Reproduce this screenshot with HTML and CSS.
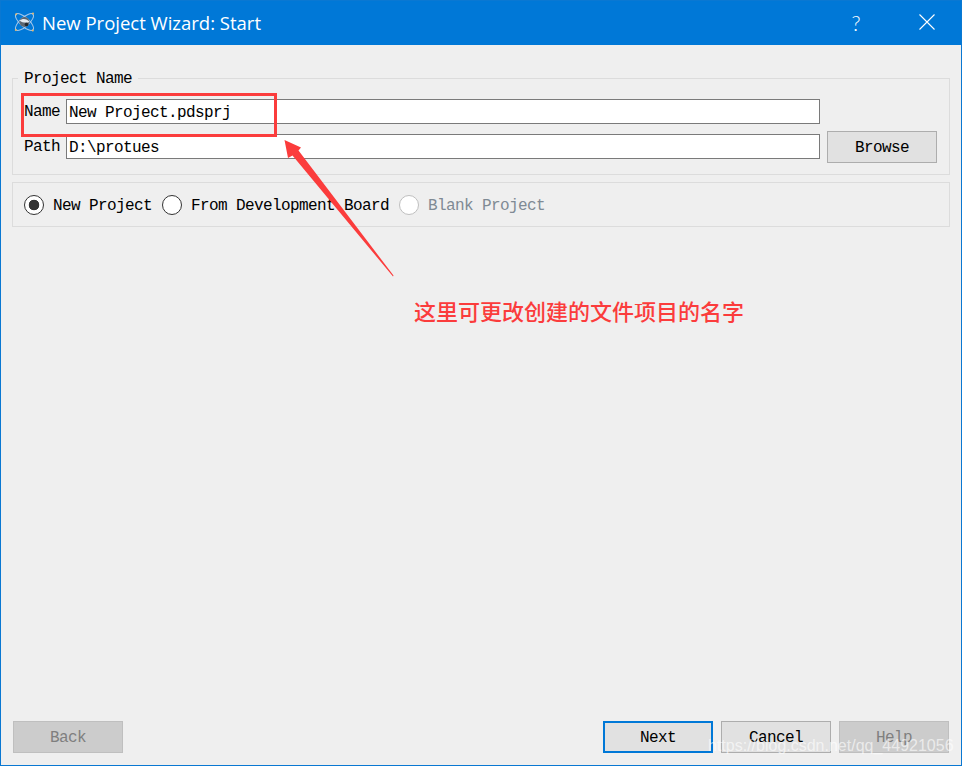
FILE: index.html
```html
<!DOCTYPE html>
<html lang="en">
<head>
<meta charset="utf-8">
<title>New Project Wizard: Start</title>
<link rel="stylesheet" href="styles.css">
</head>
<body>
<div class="window">
  <header class="titlebar">
    <svg class="app-icon" width="24" height="24" viewBox="0 0 24 24">
      <g fill="none" stroke="#a6c8ea" stroke-width="1">
        <ellipse cx="11.5" cy="12" rx="11.5" ry="4.4" transform="rotate(42 11.5 12)"/>
        <ellipse cx="11.5" cy="12" rx="11.5" ry="4.4" transform="rotate(-42 11.5 12)"/>
      </g>
      <circle cx="11.5" cy="12" r="5" fill="#5c6772"/>
      <path d="M6.5 10.5 C9.5 8 14 8.5 16.6 12 C13.5 13 9.5 13 6.5 10.5Z" fill="#e3eaf0"/>
      <circle cx="13.5" cy="14.6" r="1.8" fill="#22282e"/>
      <g fill="#e8b96a">
        <circle cx="3.2" cy="4.2" r="1"/>
        <circle cx="20" cy="3.4" r="1"/>
        <circle cx="2.8" cy="20" r="1"/>
        <circle cx="19.8" cy="20.4" r="1"/>
      </g>
    </svg>
    <span class="title-text">New Project Wizard: Start</span>
    <span class="help-glyph">?</span>
    <svg class="close-glyph" width="16" height="16" viewBox="0 0 16 16">
      <path d="M0.5 0.5 L15.5 15.5 M15.5 0.5 L0.5 15.5" stroke="#fff" stroke-width="1.1" fill="none"/>
    </svg>
  </header>

  <main class="content">
    <section class="group group-name">
      <span class="legend">Project Name</span>
      <div class="form-row row-name">
        <label class="field-label">Name</label>
        <div class="input">New Project.pdsprj</div>
      </div>
      <div class="form-row row-path">
        <label class="field-label">Path</label>
        <div class="input">D:\protues</div>
        <button class="btn browse">Browse</button>
      </div>
    </section>

    <section class="group group-type">
      <div class="radio-item">
        <span class="radio checked"></span><span>New Project</span>
      </div>
      <div class="radio-item">
        <span class="radio"></span><span>From Development Board</span>
      </div>
      <div class="radio-item disabled">
        <span class="radio"></span><span>Blank Project</span>
      </div>
    </section>

    <footer class="buttons">
      <button class="btn off">Back</button>
      <span class="spacer"></span>
      <button class="btn primary">Next</button>
      <button class="btn">Cancel</button>
      <button class="btn off">Help</button>
    </footer>
  </main>
</div>

<div class="mark-box"></div>
<svg class="mark-arrow" width="962" height="766" viewBox="0 0 962 766">
  <polygon points="284.5,140 301,147.5 298.5,150.5 393.5,275.5 393,276.5 292.5,155.5 288,158" fill="#fb3c3c"/>
</svg>
<div class="mark-note">这里可更改创建的文件项目的名字</div>
<div class="watermark">https://blog.csdn.net/qq_44921056</div>
</body>
</html>
```
FILE: styles.css
```css
* { box-sizing: border-box; }
html, body { margin: 0; padding: 0; }
body {
  width: 962px;
  height: 766px;
  overflow: hidden;
  position: relative;
  font-family: "Liberation Mono", "Noto Sans CJK SC", monospace;
  font-size: 16px;
  letter-spacing: -0.6px;
  color: #000;
  background: #efefef;
}
.window {
  width: 962px;
  height: 766px;
  border: 1px solid #0a78d2;
  display: flex;
  flex-direction: column;
}
.titlebar {
  height: 44px;
  flex: none;
  background: #0078d7;
  color: #fff;
  display: flex;
  align-items: center;
  padding-left: 12px;
  padding-bottom: 2px;
  letter-spacing: 0;
}
.app-icon { flex: none; margin-right: 5px; }
.title-text {
  font-family: "Open Sans", "Noto Sans", sans-serif;
  font-size: 18.5px;
  flex: 1;
}
.help-glyph {
  font-family: "Lato", "Open Sans", sans-serif;
  font-weight: 300;
  font-size: 21px;
  width: 10px;
  margin-right: 58px;
  text-align: center;
}
.close-glyph { flex: none; margin-right: 26px; }

.content {
  flex: 1;
  display: flex;
  flex-direction: column;
  padding: 33px 11px 12px;
}
.group { border: 1px solid #dcdcdc; }
.group-name {
  height: 97px;
  padding: 20px 12px 0 11px;
  position: relative;
}
.legend {
  position: absolute;
  left: 5px;
  top: -9px;
  padding: 0 6px;
  line-height: 18px;
  background: #efefef;
}
.form-row { display: flex; }
.row-name { height: 25px; margin-bottom: 7px; }
.row-path { height: 32px; }
.field-label { width: 42px; flex: none; line-height: 27px; }
.row-path .field-label { margin-top: 3px; }
.input {
  width: 754px;
  height: 25px;
  flex: none;
  background: #fff;
  border: 1px solid #7a7a7a;
  line-height: 26px;
  padding-left: 2px;
  white-space: pre;
}
.row-path .input { margin-top: 3px; }
.browse { margin-left: 7px; }
.btn {
  width: 110px;
  height: 32px;
  flex: none;
  padding: 2px 0 0;
  background: #e1e1e1;
  border: 1px solid #adadad;
  font: inherit;
  letter-spacing: inherit;
  color: #000;
}
.btn.primary { border: 2px solid #0078d7; padding-top: 2px; }
.btn.off { background: #cccccc; border-color: #bfbfbf; color: #7f7f7f; }

.group-type {
  height: 45px;
  margin-top: 7px;
  padding-left: 11px;
  display: flex;
  align-items: center;
  gap: 10px;
}
.radio-item { display: flex; align-items: center; gap: 9px; line-height: 22px; }
.radio-item span:last-child { padding-top: 3px; }
.radio {
  width: 20px;
  height: 20px;
  border: 1px solid #333;
  border-radius: 50%;
  background: #fff;
  flex: none;
}
.radio.checked {
  background: radial-gradient(circle, #333 0 5px, #fff 5.6px);
}
.disabled { color: #7f8a94; }
.disabled .radio { border-color: #bfbfbf; }

.buttons {
  margin-top: auto;
  padding: 0 1px;
  display: flex;
  gap: 8px;
}
.spacer { flex: 1; }

.mark-box {
  position: absolute;
  left: 21px;
  top: 93px;
  width: 256px;
  height: 44px;
  border: 3px solid #fb3c3c;
}
.mark-arrow { position: absolute; left: 0; top: 0; }
.mark-note {
  position: absolute;
  left: 414px;
  top: 295px;
  font-family: "Noto Sans CJK SC", sans-serif;
  font-size: 22px;
  font-weight: 500;
  letter-spacing: 0;
  line-height: 30px;
  color: #fb3c3c;
  white-space: nowrap;
}
.watermark {
  position: absolute;
  left: 708px;
  top: 736px;
  font-family: "Liberation Sans", sans-serif;
  font-size: 16px;
  letter-spacing: 0;
  line-height: 20px;
  color: rgba(255, 255, 255, 0.62);
  white-space: nowrap;
}
```
